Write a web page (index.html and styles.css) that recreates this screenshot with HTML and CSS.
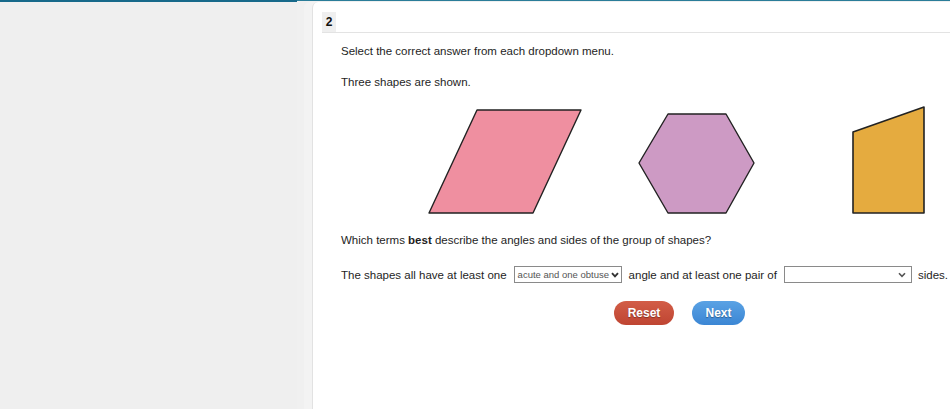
FILE: index.html
```html
<!DOCTYPE html>
<html>
<head>
<meta charset="utf-8">
<link rel="stylesheet" href="styles.css">
</head>
<body>
<div class="topline">
  <div class="topline-left"></div>
  <div class="topline-right"></div>
</div>
<div class="layout">
  <aside class="sidebar"></aside>
  <main class="card">
    <div class="qhead"><span class="qnum">2</span></div>
    <div class="content">
      <p class="line first">Select the correct answer from each dropdown menu.</p>
      <p class="line gap">Three shapes are shown.</p>
      <svg class="shapes" width="609" height="114" viewBox="0 0 609 114">
        <polygon points="88,110 136,7 240,7 192,110" fill="#ef8fa0" stroke="#222" stroke-width="1.4" stroke-linejoin="round"/>
        <polygon points="298,60 327,11 385,11 413,60 385,110 327,110" fill="#cd9ac4" stroke="#222" stroke-width="1.4" stroke-linejoin="round"/>
        <polygon points="512,110 512,29 583,4 583,110" fill="#e5ab3f" stroke="#222" stroke-width="1.6" stroke-linejoin="round"/>
      </svg>
      <p class="line gap2">Which terms <b>best</b> describe the angles and sides of the group of shapes?</p>
      <div class="sentence">
        <span>The shapes all have at least one</span>
        <span class="dd dd1"><span class="dd-text">acute and one obtuse</span><svg class="chev" width="8" height="6" viewBox="0 0 8 6"><path d="M1 1.2 L4 4.4 L7 1.2" fill="none" stroke="#333" stroke-width="1.9"/></svg></span>
        <span>angle and at least one pair of</span>
        <span class="dd dd2"><span class="dd-text"></span><svg class="chev" width="8" height="6" viewBox="0 0 8 6"><path d="M1 1.2 L4 4.4 L7 1.2" fill="none" stroke="#555" stroke-width="1.6"/></svg></span>
        <span class="sides">sides.</span>
      </div>
      <div class="buttons">
        <button class="btn reset">Reset</button>
        <button class="btn next">Next</button>
      </div>
    </div>
  </main>
</div>
</body>
</html>
```
FILE: styles.css
```css
html, body {
  margin: 0;
  padding: 0;
  width: 950px;
  height: 409px;
  overflow: hidden;
  background: #f0f0f0;
  font-family: "Liberation Sans", Arial, sans-serif;
  font-size: 11.5px;
  color: #1e1e1e;
}
.topline {
  display: flex;
  align-items: flex-start;
  height: 2px;
}
.topline-left {
  width: 297px;
  height: 2px;
  background: #17698a;
}
.topline-right {
  flex: 1;
  height: 1px;
  background: #2a7d99;
}
.layout {
  display: flex;
  height: 407px;
}
.sidebar {
  width: 297px;
  background: #efefef;
}
.card {
  width: 638px;
  margin-left: 15px;
  flex: none;
  background: #fff;
  border-left: 1px solid #e2e2e2;
  border-top-left-radius: 6px;
  padding-top: 10px;
  padding-left: 9px;
  box-sizing: border-box;
  box-shadow: -8px 0 0 #f3f3f3;
}
.qhead {
  border-bottom: 1px solid #e3e3e3;
  height: 20px;
  display: flex;
}
.qnum {
  width: 14px;
  height: 20px;
  background: #efefef;
  font-weight: bold;
  font-size: 12px;
  line-height: 20px;
  text-align: center;
  color: #111;
}
.content {
  padding-left: 19px;
}
.line {
  margin: 0;
  line-height: 16px;
  white-space: nowrap;
}
.first { margin-top: 10px; }
.gap { margin-top: 15px; }
.shapes {
  display: block;
  margin-top: 13px;
}
.gap2 { margin-top: 15px; }
.sentence {
  margin-top: 18px;
  display: flex;
  align-items: center;
  height: 17px;
  white-space: nowrap;
}
.dd {
  height: 17px;
  box-sizing: border-box;
  border: 1px solid #8a8a8a;
  display: flex;
  align-items: center;
  justify-content: space-between;
  padding: 0 2px 0 3px;
  background: #fff;
  flex: none;
}
.dd1 { width: 108px; margin: 0 7px 0 7px; }
.dd2 { width: 128px; margin: 0 6px 0 7px; padding-right: 5px; }
.dd-text {
  font-size: 9.5px;
  color: #555;
}
.chev { display: block; margin-top: 1px; }
.buttons {
  margin-top: 18px;
  margin-left: 273px;
  display: flex;
  gap: 18px;
}
.btn {
  border: none;
  height: 24px;
  border-radius: 12px;
  color: #fff;
  font-family: "Liberation Sans", Arial, sans-serif;
  font-weight: bold;
  font-size: 12px;
  text-shadow: 0 1px 1px rgba(0,0,0,0.35);
  padding: 0;
}
.reset {
  width: 60px;
  background: linear-gradient(#d25d47, #bf4532);
}
.next {
  width: 53px;
  background: linear-gradient(#5aa2e4, #3b86d4);
}
```
